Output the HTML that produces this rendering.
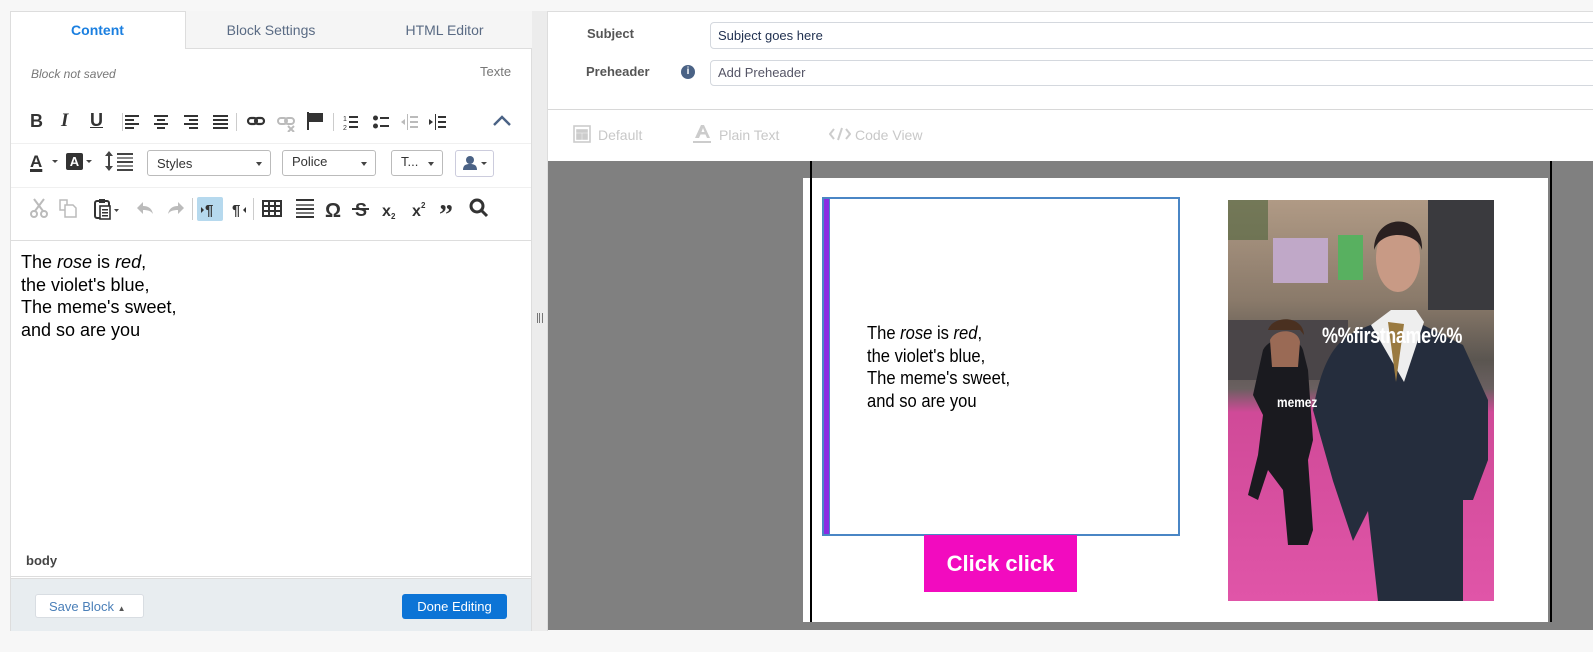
<!DOCTYPE html>
<html><head><meta charset="utf-8"><style>
*{box-sizing:border-box;margin:0;padding:0}
body{width:1593px;height:652px;background:#f7f7f7;font-family:"Liberation Sans",Arial,sans-serif;position:relative;overflow:hidden}
.a{position:absolute}
.ic{position:absolute;font-weight:bold;color:#333;font-size:17px;text-align:center;line-height:20px}
.sel{position:absolute;height:26px;border:1px solid #bbb;border-radius:3px;background:#fff;font-size:13px;color:#333;padding:5px 9px}
.sel:after{content:"";position:absolute;right:8px;top:11px;border:3px solid transparent;border-top:4px solid #444}
.sep{position:absolute;width:1px;height:18px;background:#ccc}
</style></head><body>
<div class="a" style="left:10px;top:11px;width:522px;height:620px;background:#fff;border:1px solid #ddd"></div>
<div class="a" style="left:185px;top:11px;width:347px;height:38px;background:#f5f5f5;border-left:1px solid #ddd;border-bottom:1px solid #ddd"></div>
<div class="a" style="left:10px;top:22px;width:175px;text-align:center;font-size:14px;font-weight:bold;color:#1a7fe0">Content</div>
<div class="a" style="left:185px;top:22px;width:172px;text-align:center;font-size:14px;color:#5a6b84">Block Settings</div>
<div class="a" style="left:357px;top:22px;width:175px;text-align:center;font-size:14px;color:#5a6b84">HTML Editor</div>
<div class="a" style="left:31px;top:67px;font-size:12px;font-style:italic;color:#777">Block not saved</div>
<div class="a" style="left:480px;top:64px;font-size:13px;color:#777">Texte</div>
<div class="ic" style="left:30px;top:111px;font-size:18px">B</div>
<div class="ic" style="left:61px;top:111px;font-style:italic;font-family:'Liberation Serif',serif;font-size:19px">I</div>
<div class="ic" style="left:90px;top:110px;text-decoration:underline;font-size:18px">U</div>
<div class="sep" style="left:122px;top:113px"></div>
<svg class="a" style="left:123px;top:112px" width="330" height="20" fill="#333">
<g transform="translate(2,3)"><rect width="14" height="2"/><rect y="4" width="9" height="2"/><rect y="8" width="14" height="2"/><rect y="12" width="9" height="2"/></g>
<g transform="translate(31,3)"><rect width="14" height="2"/><rect x="3" y="4" width="8" height="2"/><rect y="8" width="14" height="2"/><rect x="3" y="12" width="8" height="2"/></g>
<g transform="translate(61,3)"><rect width="14" height="2"/><rect x="5" y="4" width="9" height="2"/><rect y="8" width="14" height="2"/><rect x="5" y="12" width="9" height="2"/></g>
<g transform="translate(90,3)"><rect width="15" height="2"/><rect y="4" width="15" height="2"/><rect y="8" width="15" height="2"/><rect y="12" width="15" height="2"/></g>
<rect x="113" y="1" width="1" height="18" fill="#ccc"/>
<g transform="translate(125,5)" fill="none" stroke="#333" stroke-width="2.2"><rect x="0" y="1" width="9" height="6" rx="3"/><rect x="7" y="1" width="9" height="6" rx="3"/></g>
<g transform="translate(155,5)" fill="none" stroke="#bbb" stroke-width="2"><rect x="0" y="1" width="9" height="6" rx="3"/><rect x="7" y="1" width="9" height="6" rx="3"/><path d="M10 9l6 6M16 9l-6 6"/></g>
<g transform="translate(184,0)"><rect x="0" y="0" width="2" height="18"/><path d="M2 1h14v9h-14z"/></g>
<rect x="210" y="1" width="1" height="18" fill="#ccc"/>
<g transform="translate(220,2)"><text x="0" y="7" font-size="7" font-family="Liberation Sans">1</text><text x="0" y="16" font-size="7" font-family="Liberation Sans">2</text><rect x="6" y="2" width="9" height="2"/><rect x="6" y="7" width="9" height="2"/><rect x="6" y="12" width="9" height="2"/></g>
<g transform="translate(250,3)"><circle cx="2.5" cy="3" r="2.5"/><circle cx="2.5" cy="11" r="2.5"/><rect x="7" y="2" width="9" height="2"/><rect x="7" y="10" width="9" height="2"/></g>
<g transform="translate(278,2)" fill="#bbb"><rect x="6" y="0" width="1" height="16"/><rect x="9" y="2" width="8" height="2"/><rect x="9" y="7" width="8" height="2"/><rect x="9" y="12" width="8" height="2"/><path d="M0 8l4-3v6z"/></g>
<g transform="translate(306,2)"><rect x="6" y="0" width="1" height="16"/><rect x="9" y="2" width="8" height="2"/><rect x="9" y="7" width="8" height="2"/><rect x="9" y="12" width="8" height="2"/><path d="M4 8l-4-3v6z"/></g>
</svg>
<svg class="a" style="left:492px;top:114px" width="20" height="14"><path d="M2 11l8-8 8 8" fill="none" stroke="#4a6285" stroke-width="2.4"/></svg>
<div class="a" style="left:11px;top:143px;width:520px;height:1px;background:#f0f0f0"></div>
<div class="ic" style="left:30px;top:152px;font-size:17px;text-decoration:underline;text-decoration-thickness:3px">A</div>
<div class="a" style="left:52px;top:160px;border:3px solid transparent;border-top:3px solid #444"></div>
<div class="a" style="left:66px;top:153px;width:17px;height:17px;background:#333;border-radius:2px;color:#fff;font-weight:bold;font-size:13px;text-align:center;line-height:17px">A</div>
<div class="a" style="left:86px;top:160px;border:3px solid transparent;border-top:3px solid #444"></div>
<svg class="a" style="left:105px;top:151px" width="32" height="22" fill="#444"><path d="M4 0l4 5h-3v10h3l-4 5-4-5h3V5H0z"/><rect x="12" y="2" width="16" height="2"/><rect x="12" y="6" width="16" height="2" fill="#888"/><rect x="12" y="10" width="16" height="2"/><rect x="12" y="14" width="16" height="2" fill="#888"/><rect x="12" y="18" width="16" height="2"/></svg>
<div class="sel" style="left:147px;top:150px;width:124px">Styles</div>
<div class="sel" style="left:282px;top:150px;width:94px;padding-top:3px">Police</div>
<div class="sel" style="left:391px;top:150px;width:52px;padding-top:3px">T...</div>
<div class="a" style="left:455px;top:150px;width:39px;height:27px;border:1px solid #ccd;border-radius:3px;background:#fff"></div>
<svg class="a" style="left:463px;top:155px" width="26" height="16" fill="#4a6285"><circle cx="7" cy="5" r="4"/><path d="M0 15c0-5 3-6 7-6s7 1 7 6z"/><path d="M18 7h6l-3 3z" fill="#444"/></svg>
<div class="a" style="left:11px;top:187px;width:520px;height:1px;background:#f0f0f0"></div>
<svg class="a" style="left:30px;top:197px" width="470" height="24">
<g stroke="#bbb" stroke-width="2" fill="none"><circle cx="4" cy="17" r="3"/><circle cx="14" cy="17" r="3"/><path d="M5 14L14 2M13 14L4 2"/></g>
<g stroke="#bbb" stroke-width="1.5" fill="#fff"><path d="M30 3h7v10h-7z"/><path d="M35 8h8l3 3v9h-11z"/></g>
<g transform="translate(64,2)"><rect x="1" y="2" width="14" height="17" rx="2" fill="none" stroke="#333" stroke-width="2"/><rect x="5" y="0" width="6" height="4" fill="#333"/><rect x="6" y="7" width="10" height="13" fill="#fff" stroke="#333" stroke-width="1.6"/><rect x="8" y="10" width="6" height="1.5" fill="#333"/><rect x="8" y="13" width="6" height="1.5" fill="#333"/><rect x="8" y="16" width="6" height="1.5" fill="#333"/><path d="M20 10h5l-2.5 3z" fill="#444"/></g>
<path d="M107 11l6-6v4c6 0 9 3 10 8-2-3-5-4-10-4v4z" fill="#bbb"/>
<path d="M154 11l-6-6v4c-6 0-9 3-10 8 2-3 5-4 10-4v4z" fill="#bbb"/>
<rect x="162" y="1" width="1" height="22" fill="#ccc"/>
<rect x="167" y="0" width="26" height="24" rx="2" fill="#b6d9ee"/>
<text x="175" y="18" font-size="15" font-weight="bold" font-family="Liberation Sans" fill="#333">¶</text><path d="M171 10l3 3-3 3z" fill="#333"/>
<text x="202" y="18" font-size="15" font-weight="bold" font-family="Liberation Sans" fill="#333">¶</text><path d="M216 10l-3 3 3 3z" fill="#333"/>
<rect x="223" y="1" width="1" height="22" fill="#ccc"/>
<g fill="none" stroke="#333" stroke-width="2"><rect x="233" y="4" width="18" height="15"/><path d="M233 9h18M233 14h18M239 4v15M245 4v15"/></g>
<g fill="#333"><rect x="266" y="2" width="18" height="2"/><rect x="266" y="7" width="18" height="2" fill="#777"/><rect x="266" y="11" width="18" height="2"/><rect x="266" y="15" width="18" height="2" fill="#777"/><rect x="266" y="19" width="18" height="2"/></g>
<text x="295" y="20" font-size="20" font-weight="bold" font-family="Liberation Sans" fill="#333">Ω</text>
<text x="325" y="19" font-size="18" font-weight="bold" font-family="Liberation Sans" fill="#333">S</text><rect x="322" y="11" width="17" height="2" fill="#333"/>
<text x="352" y="19" font-size="16" font-weight="bold" font-family="Liberation Sans" fill="#333">x</text><text x="361" y="22" font-size="8" font-weight="bold" font-family="Liberation Sans" fill="#333">2</text>
<text x="382" y="19" font-size="16" font-weight="bold" font-family="Liberation Sans" fill="#333">x</text><text x="391" y="11" font-size="8" font-weight="bold" font-family="Liberation Sans" fill="#333">2</text>
<text x="409" y="27" font-size="28" font-weight="bold" font-family="Liberation Serif" fill="#333">”</text>
<g stroke="#333" stroke-width="3" fill="none"><circle cx="447" cy="9" r="6"/><path d="M451 13l6 6"/></g>
</svg>
<div class="a" style="left:11px;top:240px;width:520px;height:1px;background:#ddd"></div>
<div class="a" style="left:21px;top:251px;font-size:18px;line-height:22.7px;color:#000">The <i>rose</i> is <i>red</i>,<br>the violet's blue,<br>The meme's sweet,<br>and so are you</div>
<div class="a" style="left:26px;top:553px;font-size:13px;font-weight:bold;color:#444">body</div>
<div class="a" style="left:11px;top:576px;width:520px;height:1px;background:#ddd"></div>
<div class="a" style="left:11px;top:578px;width:520px;height:53px;background:#e8edf0;border-top:1px solid #ddd"></div>
<div class="a" style="left:35px;top:594px;width:109px;height:24px;background:#fff;border:1px solid #d8dde2;border-radius:3px;font-size:13px;color:#4a7fb8;padding:4px 0 0 13px">Save Block <span style="font-size:8px;color:#555">▲</span></div>
<div class="a" style="left:402px;top:594px;width:105px;height:25px;background:#0c74d6;border-radius:3px;font-size:13px;color:#fff;text-align:center;line-height:25px">Done Editing</div>
<div class="a" style="left:532px;top:11px;width:16px;height:620px;background:#ececec;border-right:1px solid #ddd"></div>
<div class="a" style="left:537px;top:313px;width:6px;height:10px;border-left:1px solid #777;border-right:1px solid #777"></div>
<div class="a" style="left:539px;top:313px;width:1px;height:10px;background:#777"></div>
<div class="a" style="left:548px;top:11px;width:1045px;height:150px;background:#fff;border-top:1px solid #ddd"></div>
<div class="a" style="left:587px;top:26px;font-size:13px;font-weight:bold;color:#555">Subject</div>
<div class="a" style="left:586px;top:64px;font-size:13px;font-weight:bold;color:#555">Preheader</div>
<div class="a" style="left:681px;top:65px;width:14px;height:14px;border-radius:50%;background:#4a6285;color:#fff;font-size:10px;font-weight:bold;text-align:center;line-height:14px">i</div>
<div class="a" style="left:710px;top:22px;width:900px;height:27px;border:1px solid #d4d8de;border-radius:4px;font-size:13px;color:#1f2f4f;padding:5px 7px">Subject goes here</div>
<div class="a" style="left:710px;top:60px;width:900px;height:26px;border:1px solid #d4d8de;border-radius:4px;font-size:13px;color:#556;padding:4px 7px">Add Preheader</div>
<div class="a" style="left:548px;top:109px;width:1045px;height:1px;background:#d8d8d8"></div>
<svg class="a" style="left:573px;top:125px" width="20" height="20" fill="none" stroke="#ccc" stroke-width="1.6"><rect x="1" y="1" width="16" height="16"/><rect x="4" y="5" width="10" height="2" fill="#ccc"/><rect x="4" y="9" width="4" height="5" fill="#ccc"/><rect x="10" y="9" width="4" height="5" fill="#ccc"/></svg>
<div class="a" style="left:598px;top:127px;font-size:14px;color:#c8c8c8">Default</div>
<svg class="a" style="left:693px;top:124px" width="20" height="22" fill="#ccc"><path d="M2 14L8 1h3l6 13h-3l-1.5-3.5h-5L6 14zM8.5 8h3L10 4z"/><rect x="0" y="17" width="18" height="2"/></svg>
<div class="a" style="left:719px;top:127px;font-size:14px;color:#c8c8c8">Plain Text</div>
<svg class="a" style="left:829px;top:127px" width="22" height="14" fill="none" stroke="#ccc" stroke-width="2"><path d="M5 2L1 7l4 5M17 2l4 5-4 5M13 1L9 13"/></svg>
<div class="a" style="left:855px;top:127px;font-size:14px;color:#c8c8c8">Code View</div>
<div class="a" style="left:548px;top:161px;width:1045px;height:461px;background:#808080"></div>
<div class="a" style="left:803px;top:178px;width:745px;height:444px;background:#fff"></div>
<div class="a" style="left:810px;top:161px;width:2px;height:469px;background:#000"></div>
<div class="a" style="left:1550px;top:161px;width:2px;height:469px;background:#000"></div>
<div class="a" style="left:822px;top:197px;width:358px;height:339px;border:2px solid #4a86c5;border-left:none"></div>
<div class="a" style="left:822px;top:197px;width:8px;height:339px;background:#4a86c5"></div>
<div class="a" style="left:824px;top:199px;width:5px;height:335px;background:#8a2be2"></div>
<div class="a" style="left:867px;top:322px;font-size:18px;line-height:22.7px;color:#000;transform:scaleX(.92);transform-origin:left">The <i>rose</i> is <i>red</i>,<br>the violet's blue,<br>The meme's sweet,<br>and so are you</div>
<div class="a" style="left:924px;top:535px;width:153px;height:57px;background:#f20bbf;color:#fff;font-size:22px;font-weight:bold;text-align:center;line-height:57px">Click click</div>
<svg class="a" style="left:1228px;top:200px" width="266" height="401">
<defs><linearGradient id="bg" x1="0" y1="0" x2="0" y2="1"><stop offset="0" stop-color="#b09a85"/><stop offset=".25" stop-color="#8a7a6a"/><stop offset=".4" stop-color="#5a5550"/><stop offset=".47" stop-color="#6a6060"/><stop offset=".53" stop-color="#d04a98"/><stop offset="1" stop-color="#e055a8"/></linearGradient></defs>
<rect width="266" height="401" fill="url(#bg)"/>
<rect x="0" y="0" width="40" height="40" fill="#5a6a45" opacity=".7"/>
<rect x="45" y="38" width="55" height="45" fill="#c0a8c8"/>
<rect x="110" y="35" width="25" height="45" fill="#58b060"/>
<rect x="200" y="0" width="66" height="110" fill="#3a3a3e"/>
<rect x="0" y="120" width="120" height="60" fill="#4a4548"/>
<path d="M35 150c8-15 35-15 40 0l5 20 5 70-5 20 5 70-5 15-20 0-5-55-15-20-10 30-10-5 10-40 5-40-10-20z" fill="#1a1a1f"/>
<path d="M42 140c5-12 28-12 30 2l-2 25-26 0z" fill="#9a6a55"/>
<path d="M40 130c5-15 35-15 36 5l-4-5-28 0z" fill="#4a3020"/>
<path d="M85 210c10-55 25-70 45-80l25-10 40 5 40 20 25 55 0 60-15 40-10 0 0 101-85 0-10-90-15 30-20-60z" fill="#252d3d"/>
<path d="M143 125l20-15 25 0 8 12-20 60z" fill="#eee"/>
<path d="M160 122l8 60 8-58z" fill="#9a7a40"/>
<ellipse cx="170" cy="58" rx="22" ry="34" fill="#c89a85"/>
<path d="M146 50c0-38 50-38 48 0-4-18-40-22-48 0z" fill="#2a2020"/>
</svg>
<div class="a" style="left:1322px;top:323px;font-size:22px;font-weight:bold;color:#fff;transform:scaleX(.82);transform-origin:left;letter-spacing:-.5px">%%firstname%%</div>
<div class="a" style="left:1277px;top:394px;font-size:14px;font-weight:bold;color:#fff;transform:scaleX(.85);transform-origin:left">memez</div>
<div class="a" style="left:548px;top:622px;width:1045px;height:8px;background:#808080"></div>
<div class="a" style="left:548px;top:630px;width:1045px;height:22px;background:#f7f7f7"></div>
</body></html>
